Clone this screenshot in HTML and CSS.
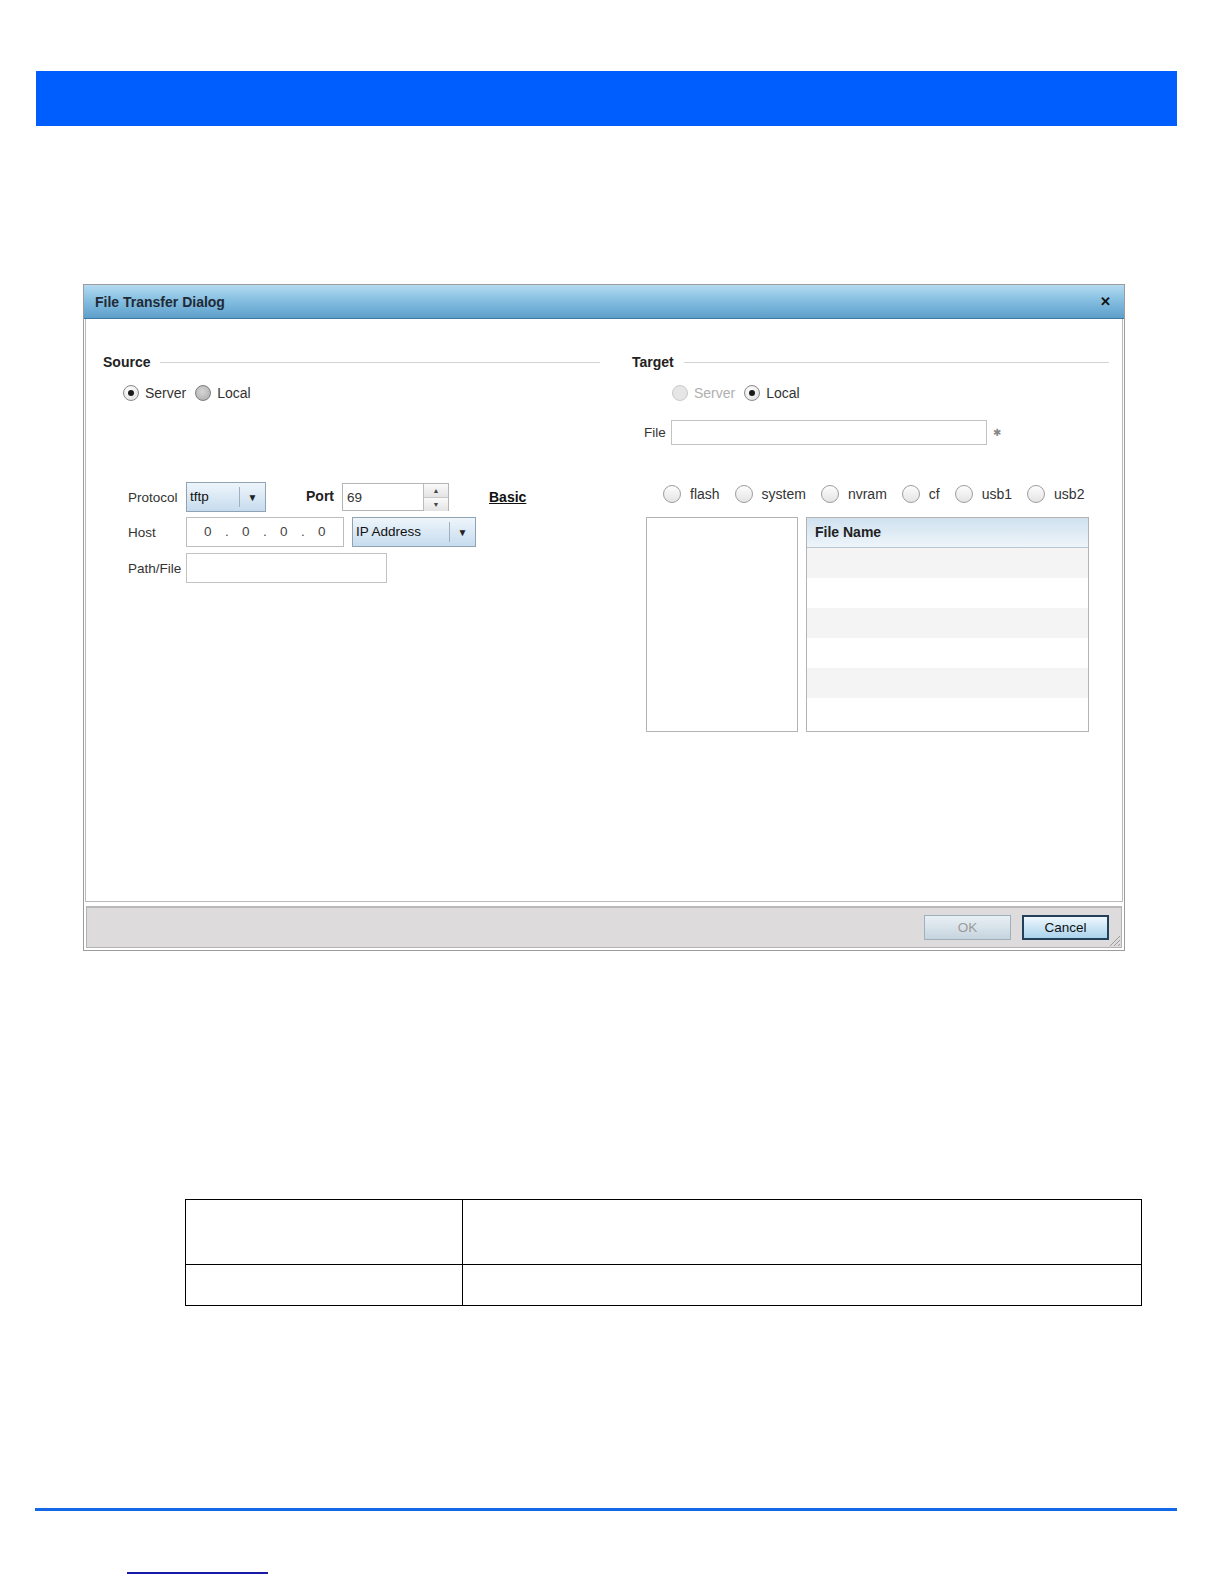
FILE: index.html
```html
<!DOCTYPE html>
<html lang="en">
<head>
  <meta charset="UTF-8">
  <title>File Transfer Dialog</title>
  <link rel="stylesheet" href="styles.css">
</head>
<body>
  <!-- Barra superior -->
  <div class="top-bar"></div>

  <!-- Dialogo -->
  <div class="dialog">
    <div class="dialog-title">
      <span>File Transfer Dialog</span>
      <span class="close">&#x2715;</span>
    </div>

    <div class="dialog-body">
      <!-- Source -->
      <div class="col source">
        <div class="legend"><span>Source</span><i></i></div>
        <div class="radio-row">
          <span class="radio checked"></span><label>Server</label>
          <span class="radio grey"></span><label>Local</label>
        </div>

        <div class="server-form">
          <div class="form-row">
            <label class="lbl">Protocol</label>
            <div class="select proto"><span>tftp</span><b>&#9660;</b></div>
            <label class="port-lbl">Port</label>
            <div class="spinner">
              <span>69</span>
              <div class="spin-btns"><em>&#9650;</em><em>&#9660;</em></div>
            </div>
            <a class="basic" href="#">Basic</a>
          </div>
          <div class="form-row">
            <label class="lbl">Host</label>
            <div class="ip-input">
              <span>0</span><i>.</i><span>0</span><i>.</i><span>0</span><i>.</i><span>0</span>
            </div>
            <div class="select ip-type"><span>IP Address</span><b>&#9660;</b></div>
          </div>
          <div class="form-row">
            <label class="lbl">Path/File</label>
            <div class="text-input path"></div>
          </div>
        </div>
      </div>

      <!-- Target -->
      <div class="col target">
        <div class="legend"><span>Target</span><i></i></div>
        <div class="radio-row">
          <span class="radio disabled"></span><label class="muted">Server</label>
          <span class="radio checked"></span><label>Local</label>
        </div>
        <div class="file-row">
          <label>File</label>
          <div class="text-input file"></div>
          <span class="req">&#10033;</span>
        </div>
        <div class="storage-row">
          <span class="radio big"></span><label>flash</label>
          <span class="radio big"></span><label>system</label>
          <span class="radio big"></span><label>nvram</label>
          <span class="radio big"></span><label>cf</label>
          <span class="radio big"></span><label>usb1</label>
          <span class="radio big"></span><label>usb2</label>
        </div>
        <div class="lists">
          <div class="dir-box"></div>
          <div class="file-table">
            <div class="file-head">File Name</div>
            <div class="file-line alt"></div>
            <div class="file-line"></div>
            <div class="file-line alt"></div>
            <div class="file-line"></div>
            <div class="file-line alt"></div>
            <div class="file-line"></div>
          </div>
        </div>
      </div>
    </div>

    <div class="dialog-footer">
      <button class="btn ok" disabled>OK</button>
      <button class="btn cancel">Cancel</button>
      <svg class="grip" width="14" height="14" viewBox="0 0 14 14">
        <path d="M13 3 L3 13 M13 7 L7 13 M13 11 L11 13" stroke="#9a9a9a" stroke-width="1"/>
      </svg>
    </div>
  </div>

  <!-- Tabla -->
  <table class="info-table">
    <tr class="r1"><td class="c1"></td><td></td></tr>
    <tr class="r2"><td class="c1"></td><td></td></tr>
  </table>

  <div class="bottom-rule"></div>
  <a class="foot-link" href="#"></a>
</body>
</html>
```

FILE: styles.css
```css
html {
  height: 1584px;
  overflow: hidden;
}

body {
  margin: 0;
  padding: 0;
  height: 1584px;
  overflow: hidden;
  background: #fff;
  font-family: "Liberation Sans", Arial, sans-serif;
  font-size: 13.5px;
  color: #333;
}

.top-bar {
  margin: 71px 0 0 36px;
  width: 1141px;
  height: 55px;
  background: #005eff;
}

/* Dialogo */
.dialog {
  position: relative;
  margin: 158px 0 0 83px;
  width: 1040px;
  height: 665px;
  border: 1px solid #9c9c9c;
  background: #fff;
}

.dialog-title {
  height: 33px;
  border-bottom: 1px solid #3a77a3;
  background: linear-gradient(#b4dbf1, #86bfe1 45%, #5d9fcb);
  display: flex;
  justify-content: space-between;
  align-items: center;
  padding: 0 13px 0 11px;
  font-size: 14px;
  font-weight: bold;
  color: #1f2a36;
}

.dialog-title .close {
  font-size: 13px;
  font-weight: bold;
  color: #111;
}

.dialog-body {
  margin: 0 1px;
  height: 547px;
  border: 1px solid #b9b9b9;
  border-top: none;
  padding: 35px 13px 0 17px;
  display: flex;
  gap: 32px;
}

.col.source { width: 497px; }
.col.target { flex: 1; }

.legend {
  display: flex;
  align-items: center;
  height: 16px;
  font-size: 14px;
  font-weight: bold;
  color: #222;
}

.legend i {
  flex: 1;
  height: 1px;
  background: #d3d3d3;
  margin-left: 10px;
}

.radio-row {
  display: flex;
  align-items: center;
  height: 20px;
  margin-top: 13px;
  padding-left: 20px;
  font-size: 14px;
}

.radio-row label { margin: 0 9px 0 6px; }
.radio-row .muted { color: #b0b0b0; }
.target .radio-row { padding-left: 40px; }

/* Radios */
.radio {
  position: relative;
  display: inline-block;
  box-sizing: border-box;
  width: 16px;
  height: 16px;
  border-radius: 50%;
  border: 1px solid #8a8a8a;
  background: radial-gradient(circle at 40% 35%, #fff, #dcdcdc);
}

.radio.checked::after {
  content: "";
  position: absolute;
  left: 4px;
  top: 4px;
  width: 6px;
  height: 6px;
  border-radius: 50%;
  background: #1a1a1a;
}

.radio.grey {
  background: radial-gradient(circle at 45% 40%, #d6d6d6, #a9a9a9);
  border-color: #7e7e7e;
}

.radio.disabled {
  background: #e6e6e6;
  border-color: #c9c9c9;
}

.radio.big {
  width: 18px;
  height: 18px;
  border-color: #9d9d9d;
  background: linear-gradient(#fdfdfd, #e4e4e4);
}

/* Formulario servidor */
.server-form {
  margin-top: 79px;
  padding-left: 25px;
}

.form-row {
  display: flex;
  align-items: center;
  height: 30px;
  margin-bottom: 5px;
}

.form-row:last-child { margin-top: 6px; }

.lbl {
  width: 58px;
  color: #333;
}

.select {
  box-sizing: border-box;
  height: 30px;
  border: 1px solid #8fa3b3;
  background: linear-gradient(#eef5fb, #c6dcee);
  display: flex;
  align-items: center;
  color: #111;
}

.select span {
  flex: 1;
  padding-left: 3px;
  border-right: 1px solid #9fb1c0;
  line-height: 20px;
}

.select b {
  width: 25px;
  text-align: center;
  font-size: 10px;
  color: #222;
}

.select.proto { width: 80px; }
.select.ip-type { width: 124px; margin-left: 8px; }

.port-lbl {
  margin: -2px 8px 0 40px;
  font-size: 14px;
  font-weight: bold;
  color: #222;
}

.spinner {
  box-sizing: border-box;
  width: 107px;
  height: 28px;
  border: 1px solid #b5b5b5;
  display: flex;
  align-items: center;
}

.spinner span { flex: 1; padding-left: 4px; }

.spin-btns {
  width: 24px;
  height: 26px;
  border-left: 1px solid #bcbcbc;
  display: flex;
  flex-direction: column;
}

.spin-btns em {
  flex: 1;
  font-style: normal;
  font-size: 7px;
  text-align: center;
  line-height: 13px;
  color: #444;
  background: linear-gradient(#fafafa, #e3e3e3);
}

.spin-btns em + em { border-top: 1px solid #c8c8c8; }

.basic {
  margin-left: 40px;
  font-size: 14px;
  font-weight: bold;
  color: #111;
  text-decoration: underline;
}

.ip-input {
  box-sizing: border-box;
  width: 158px;
  height: 30px;
  border: 1px solid #bcbcbc;
  display: flex;
  align-items: center;
  padding: 0 0 2px 17px;
  color: #444;
}

.ip-input span { width: 8px; }
.ip-input i { font-style: normal; width: 30px; text-align: center; }

.text-input {
  box-sizing: border-box;
  border: 1px solid #c3c3c3;
  background: #fff;
}

.text-input.path { width: 201px; height: 30px; }

/* Destino */
.file-row {
  display: flex;
  align-items: center;
  margin-top: 17px;
  padding-left: 12px;
}

.file-row label { width: 27px; }
.text-input.file { width: 316px; height: 25px; }

.req {
  margin-left: 6px;
  font-size: 10px;
  color: #888;
}

.storage-row {
  display: flex;
  align-items: center;
  height: 18px;
  margin-top: 40px;
  padding-left: 31px;
  font-size: 14px;
}

.storage-row label { margin: 0 15px 0 9px; }

.lists {
  display: flex;
  gap: 8px;
  margin-top: 14px;
  padding-left: 14px;
}

.dir-box {
  box-sizing: border-box;
  width: 152px;
  height: 215px;
  border: 1px solid #b3b3b3;
}

.file-table {
  box-sizing: border-box;
  width: 283px;
  height: 215px;
  border: 1px solid #b3b3b3;
  overflow: hidden;
}

.file-head {
  height: 29px;
  line-height: 29px;
  padding-left: 8px;
  border-bottom: 1px solid #b8c6d2;
  background: linear-gradient(#cfe1ef, #eef5fa);
  font-size: 14px;
  font-weight: bold;
  color: #222;
}

.file-line { height: 30px; }
.file-line.alt { background: #f4f4f4; }

/* Pie del dialogo */
.dialog-footer {
  position: relative;
  box-sizing: border-box;
  height: 42px;
  margin: 4px 2px 0;
  border: 1px solid #b2b2b2;
  border-top: 2px solid #b8b8b8;
  background: #dddbdc;
  display: flex;
  justify-content: flex-end;
  align-items: flex-start;
  gap: 11px;
  padding: 7px 12px 0 0;
}

.btn {
  width: 87px;
  height: 25px;
  font-family: "Liberation Sans", Arial, sans-serif;
  font-size: 13.5px;
  padding: 0;
}

.btn.ok {
  border: 1px solid #9fb0bd;
  background: linear-gradient(#e9f0f5, #c6d4de);
  color: #9b9b9b;
}

.btn.cancel {
  border: 2px solid #23405a;
  background: linear-gradient(#eef7fd, #aad3ec);
  color: #111;
}

.grip {
  position: absolute;
  right: 0;
  bottom: 0;
}

/* Tabla inferior */
.info-table {
  margin: 248px 0 0 185px;
  width: 957px;
  border-collapse: collapse;
}

.info-table td {
  border: 1.5px solid #000;
  padding: 0;
}

.info-table .c1 { width: 276px; }
.info-table .r1 td { height: 64px; }
.info-table .r2 td { height: 40px; }

.bottom-rule {
  margin: 202px 0 0 35px;
  width: 1142px;
  height: 3px;
  background: #1468e6;
}

.foot-link {
  display: block;
  margin: 61px 0 0 127px;
  width: 141px;
  height: 0;
  border-bottom: 2px solid #1a1aa8;
}
```
